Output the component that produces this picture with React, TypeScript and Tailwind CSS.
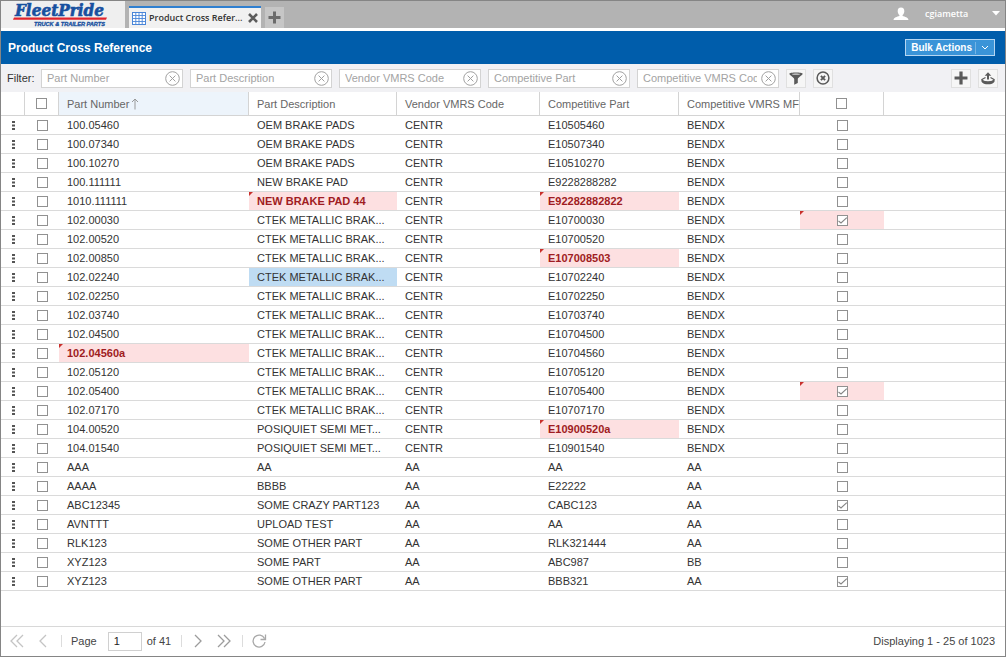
import { useState } from "react";
import type { ReactNode } from "react";

type ColumnKey = "part" | "desc" | "vendor" | "comp" | "mfr";
type Mark = ColumnKey | "flag";

interface Row {
  part: string;
  desc: string;
  vendor: string;
  comp: string;
  mfr: string;
  flag?: boolean;
  changed?: Mark[];
}

const CTEK = "CTEK METALLIC BRAK...";
const POSIQUIET = "POSIQUIET SEMI MET...";

const row = (
  part: string,
  desc: string,
  vendor: string,
  comp: string,
  mfr: string,
  flag = false,
  changed: Mark[] = [],
): Row => ({ part, desc, vendor, comp, mfr, flag, changed });

const ROWS: Row[] = [
  row("100.05460", "OEM BRAKE PADS", "CENTR", "E10505460", "BENDX"),
  row("100.07340", "OEM BRAKE PADS", "CENTR", "E10507340", "BENDX"),
  row("100.10270", "OEM BRAKE PADS", "CENTR", "E10510270", "BENDX"),
  row("100.111111", "NEW BRAKE PAD", "CENTR", "E9228288282", "BENDX"),
  row("1010.111111", "NEW BRAKE PAD 44", "CENTR", "E92282882822", "BENDX", false, ["desc", "comp"]),
  row("102.00030", CTEK, "CENTR", "E10700030", "BENDX", true, ["flag"]),
  row("102.00520", CTEK, "CENTR", "E10700520", "BENDX"),
  row("102.00850", CTEK, "CENTR", "E107008503", "BENDX", false, ["comp"]),
  row("102.02240", CTEK, "CENTR", "E10702240", "BENDX"),
  row("102.02250", CTEK, "CENTR", "E10702250", "BENDX"),
  row("102.03740", CTEK, "CENTR", "E10703740", "BENDX"),
  row("102.04500", CTEK, "CENTR", "E10704500", "BENDX"),
  row("102.04560a", CTEK, "CENTR", "E10704560", "BENDX", false, ["part"]),
  row("102.05120", CTEK, "CENTR", "E10705120", "BENDX"),
  row("102.05400", CTEK, "CENTR", "E10705400", "BENDX", true, ["flag"]),
  row("102.07170", CTEK, "CENTR", "E10707170", "BENDX"),
  row("104.00520", POSIQUIET, "CENTR", "E10900520a", "BENDX", false, ["comp"]),
  row("104.01540", POSIQUIET, "CENTR", "E10901540", "BENDX"),
  row("AAA", "AA", "AA", "AA", "AA"),
  row("AAAA", "BBBB", "AA", "E22222", "AA"),
  row("ABC12345", "SOME CRAZY PART123", "AA", "CABC123", "AA", true),
  row("AVNTTT", "UPLOAD TEST", "AA", "AA", "AA"),
  row("RLK123", "SOME OTHER PART", "AA", "RLK321444", "AA"),
  row("XYZ123", "SOME PART", "AA", "ABC987", "BB"),
  row("XYZ123", "SOME OTHER PART", "AA", "BBB321", "AA", true),
];

const COLUMNS: ColumnKey[] = ["part", "desc", "vendor", "comp", "mfr"];

const FILTERS = [
  "Part Number",
  "Part Description",
  "Vendor VMRS Code",
  "Competitive Part",
  "Competitive VMRS Code",
];

function Logo() {
  return (
    <svg viewBox="0 0 110 27" className="h-[27px] w-[110px]" role="img" aria-label="FleetPride Truck & Trailer Parts">
      <text x="3" y="15" fontFamily="DejaVu Serif Condensed, DejaVu Serif, serif" fontSize="17" fontWeight="700" fontStyle="italic" fill="#17509f" stroke="#17509f" strokeWidth="0.6">
        FleetPride
      </text>
      <path d="M2 16.6H95L94 18.8H1Z" fill="#e0242c" />
      <text x="22" y="24.5" fontFamily="Liberation Sans, sans-serif" fontSize="5.6" fontWeight="700" fontStyle="italic" fill="#17509f" stroke="#17509f" strokeWidth="0.3">
        TRUCK &amp; TRAILER PARTS
      </text>
    </svg>
  );
}

function GridIcon() {
  return (
    <svg viewBox="0 0 14 13" className="h-[13px] w-3.5 shrink-0" aria-hidden="true">
      <rect x="0.5" y="0.5" width="13" height="12" fill="#fff" stroke="#4a86d8" />
      <path d="M0.5 3.5H13.5M0.5 6.5H13.5M0.5 9.5H13.5M3.8 0.5V12.5M7 0.5V12.5M10.2 0.5V12.5" stroke="#4a86d8" strokeWidth="0.9" />
    </svg>
  );
}

function PlusIcon({ className }: { className: string }) {
  return (
    <svg viewBox="0 0 13 13" className={className} aria-hidden="true">
      <path d="M5 0.5H8V5H12.5V8H8V12.5H5V8H0.5V5H5Z" fill="currentColor" />
    </svg>
  );
}

function ToolButton({ label, children }: { label: string; children: ReactNode }) {
  return (
    <button type="button" aria-label={label} className="flex h-[19px] w-5 shrink-0 items-center justify-center border border-[#e0e0e0] bg-[#f6f6f6] text-[#5a5a5a]">
      {children}
    </button>
  );
}

function Tick({ label, initial = false }: { label: string; initial?: boolean }) {
  const [on, setOn] = useState(initial);
  return (
    <span className="relative mx-auto block size-[11px]">
      <input
        type="checkbox"
        aria-label={label}
        checked={on}
        onChange={() => setOn(!on)}
        className="block size-[11px] appearance-none border border-[#919191] bg-white"
      />
      {on && (
        <svg viewBox="0 0 11 11" className="pointer-events-none absolute inset-0 size-[11px]" aria-hidden="true">
          <path d="M1.5 6L4 8L9.8 2.6" fill="none" stroke="#858585" strokeWidth="1.1" />
        </svg>
      )}
    </span>
  );
}

function ChangedCorner() {
  return (
    <svg viewBox="0 0 4 4" className="absolute top-0 left-0 size-1" aria-hidden="true">
      <path d="M0 0H4L0 4Z" fill="#c9302c" />
    </svg>
  );
}

function PagerButton({ label, path, tone }: { label: string; path: string; tone: string }) {
  return (
    <button type="button" aria-label={label} className={tone}>
      <svg viewBox="0 0 16 16" className="size-4" fill="none" stroke="currentColor" strokeWidth="1.3" aria-hidden="true">
        <path d={path} />
      </svg>
    </button>
  );
}

function TopBar() {
  return (
    <header className="flex h-[27px] items-end bg-[#b3b3b3]">
      <div className="flex h-full w-[124px] items-start bg-[#efefef] pl-[11px]">
        <Logo />
      </div>
      <div className="ml-1 flex h-[22px] w-[132px] items-center border-t-2 border-[#2f7fd0] bg-[#f1f1f1] pl-[3px] pr-0.5">
        <GridIcon />
        <span className="ml-[3px] flex-1 whitespace-nowrap font-['Open_Sans',sans-serif] text-[9px] font-semibold text-[#333]">
          Product Cross Refer...
        </span>
        <button type="button" aria-label="Close tab" className="text-[#5c5c5c]">
          <svg viewBox="0 0 12 12" className="size-3" aria-hidden="true">
            <path d="M2 2L10 10M10 2L2 10" stroke="currentColor" strokeWidth="2.6" />
          </svg>
        </button>
      </div>
      <button type="button" aria-label="New tab" className="ml-1 flex h-[21px] w-[19px] items-center justify-center bg-[#c6c6c6] text-[#6b6b6b]">
        <PlusIcon className="size-[13px]" />
      </button>
      <button type="button" className="ml-auto flex h-full items-center pr-[5px] pb-0.5 text-white">
        <svg viewBox="0 0 16 14" className="h-3.5 w-4" aria-hidden="true">
          <path d="M8 0.5C10.3 0.5 11.5 2.2 11.3 4.4C11.2 6 10.5 7.2 9.6 7.9V9C12 9.8 15 10.3 15.5 13H0.5C1 10.3 4 9.8 6.4 9V7.9C5.5 7.2 4.8 6 4.7 4.4C4.5 2.2 5.7 0.5 8 0.5Z" fill="currentColor" />
        </svg>
        <span className="ml-4 w-[67px] text-left font-['Open_Sans',sans-serif] text-[9px] font-semibold">cgiametta</span>
        <svg viewBox="0 0 8 5" className="h-[5px] w-2" aria-hidden="true">
          <path d="M0 0H8L4 4.5Z" fill="currentColor" />
        </svg>
      </button>
    </header>
  );
}

function FilterBar() {
  return (
    <form className="flex h-7 items-center bg-[#f1f1f4] pl-1.5 pr-[7px]" onSubmit={(e) => e.preventDefault()}>
      <span className="w-[34px] shrink-0 text-[#333]">Filter:</span>
      <div className="flex items-center gap-[7px]">
        {FILTERS.map((name) => (
          <div key={name} className="flex h-[19px] w-[142px] items-center border border-[#d3d3d3] bg-white pr-0.5 pl-[5px]">
            <input
              type="text"
              aria-label={name}
              placeholder={name}
              className="w-0 min-w-0 flex-1 bg-transparent text-[#333] outline-none placeholder:text-[#a3a3a3]"
            />
            <button type="button" aria-label={`Clear ${name}`} className="ml-1 text-[#a0a0a0]">
              <svg viewBox="0 0 15 15" className="block size-[15px]" fill="none" stroke="currentColor" aria-hidden="true">
                <circle cx="7.5" cy="7.5" r="6.8" />
                <path d="M4.6 4.6L10.4 10.4M10.4 4.6L4.6 10.4" />
              </svg>
            </button>
          </div>
        ))}
        <ToolButton label="Apply filter">
          <svg viewBox="0 0 14 13" className="h-[13px] w-3.5" aria-hidden="true">
            <path d="M0.3 1.8C0.3 0.2 13.7 0.2 13.7 1.8C13.7 3.2 9 5.5 8.8 7V11L5.2 12.8V7C5 5.5 0.3 3.2 0.3 1.8Z" fill="currentColor" />
            <path d="M2.8 2.2C4.5 1.4 9.5 1.4 11.2 2.2C9.5 3 4.5 3 2.8 2.2Z" fill="#d8d8d8" />
          </svg>
        </ToolButton>
        <ToolButton label="Clear filters">
          <svg viewBox="0 0 14 14" className="size-3.5" fill="none" stroke="currentColor" aria-hidden="true">
            <circle cx="7" cy="7" r="5.9" strokeWidth="1.5" />
            <path d="M4.9 4.9L9.1 9.1M9.1 4.9L4.9 9.1" strokeWidth="1.9" />
          </svg>
        </ToolButton>
      </div>
      <div className="ml-auto flex gap-[7px]">
        <ToolButton label="Add">
          <PlusIcon className="size-3.5" />
        </ToolButton>
        <ToolButton label="Export">
          <svg viewBox="0 0 14 13" className="h-[13px] w-3.5" aria-hidden="true">
            <path d="M7 0.3L10.3 3.8H8V7.6H6V3.8H3.7Z" fill="currentColor" />
            <path d="M4.5 5.6L0.9 7.6C1.4 9.2 3.8 10 7 10S12.6 9.2 13.1 7.6L9.5 5.6" fill="none" stroke="currentColor" strokeWidth="1.2" />
            <path d="M0.5 7.6C2.5 10 11.5 10 13.5 7.6V9.8C12 13.2 2 13.2 0.5 9.8Z" fill="currentColor" />
          </svg>
        </ToolButton>
      </div>
    </form>
  );
}

function Grid() {
  const head = "border-r border-b border-[#d4d4d4] p-0 pl-2 text-left font-normal whitespace-nowrap overflow-hidden";
  return (
    <table className="w-full table-fixed border-separate border-spacing-0">
      <colgroup>
        <col className="w-6" />
        <col className="w-[34px]" />
        <col className="w-[190px]" />
        <col className="w-[148px]" />
        <col className="w-[143px]" />
        <col className="w-[139px]" />
        <col className="w-[121px]" />
        <col className="w-[84px]" />
        <col />
      </colgroup>
      <thead>
        <tr className="h-6 text-[#666]">
          <td className="border-r border-b border-[#d4d4d4] p-0" />
          <th className="border-r border-b border-[#d4d4d4] p-0">
            <Tick label="Select all rows" />
          </th>
          <th className={`${head} bg-[#edf4fb]`} aria-sort="ascending">
            <span className="flex items-center">
              Part Number
              <svg viewBox="0 0 8 12" className="ml-0.5 h-3 w-2" fill="none" stroke="#999" aria-hidden="true">
                <path d="M4 1V11.5M1 4L4 1L7 4" />
              </svg>
            </span>
          </th>
          <th className={head}>Part Description</th>
          <th className={head}>Vendor VMRS Code</th>
          <th className={head}>Competitive Part</th>
          <th className={head}>Competitive VMRS MFR</th>
          <th className="border-r border-b border-[#d4d4d4] p-0">
            <Tick label="Flag all rows" />
          </th>
          <td className="border-b border-[#d4d4d4] p-0" />
        </tr>
      </thead>
      <tbody>
        {ROWS.map((r, i) => (
          <tr key={i} className="h-[19px] text-[#333]">
            <td className="border-b border-[#dadada] p-0">
              <button type="button" aria-label={`Row ${i + 1} menu`} className="mx-auto block text-[#555]">
                <svg viewBox="0 0 3 9" className="block h-[9px] w-[3px]" aria-hidden="true">
                  <path d="M0 0H3V2H0ZM0 3.5H3V5.5H0ZM0 7H3V9H0Z" fill="currentColor" />
                </svg>
              </button>
            </td>
            <td className="border-b border-[#dadada] p-0">
              <Tick label={`Select row ${i + 1}`} />
            </td>
            {COLUMNS.map((c) => {
              const changed = r.changed?.includes(c);
              const tone = changed
                ? "bg-[#fde0e1] font-bold text-[#a01c22]"
                : i === 8 && c === "desc"
                  ? "bg-[#bfdcf3]"
                  : "";
              return (
                <td key={c} className={`relative truncate border-b border-[#dadada] py-0 pr-2 pl-2 leading-[18px] ${tone}`}>
                  {changed && <ChangedCorner />}
                  {r[c]}
                </td>
              );
            })}
            <td className={`relative border-b border-[#dadada] p-0 ${r.changed?.includes("flag") ? "bg-[#fde0e1]" : ""}`}>
              {r.changed?.includes("flag") && <ChangedCorner />}
              <Tick label={`Flag row ${i + 1}`} initial={r.flag} />
            </td>
            <td className="border-b border-[#dadada] p-0" />
          </tr>
        ))}
      </tbody>
    </table>
  );
}

function Pager() {
  const bar = <span className="h-3 w-px bg-[#dcdcdc]" />;
  return (
    <footer className="mt-auto flex h-[30px] items-center border-t border-[#d8d8d8] pr-2.5 pb-px pl-2 text-[#444]">
      <PagerButton label="First page" tone="text-[#c4c4c4]" path="M8 2L2 8L8 14M14 2L8 8L14 14" />
      <span className="w-2.5" />
      <PagerButton label="Previous page" tone="text-[#c4c4c4]" path="M11 2L5 8L11 14" />
      <span className="w-2.5" />
      {bar}
      <label htmlFor="page" className="ml-[9px]">Page</label>
      <input id="page" type="text" defaultValue="1" className="ml-[11px] h-[19px] w-[34px] border border-[#d0d0d0] bg-white pl-[5px] text-[#222] outline-none" />
      <span className="mr-2.5 ml-[5px]">of 41</span>
      {bar}
      <span className="w-2" />
      <PagerButton label="Next page" tone="text-[#9c9c9c]" path="M5 2L11 8L5 14" />
      <span className="w-2.5" />
      <PagerButton label="Last page" tone="text-[#9c9c9c]" path="M2 2L8 8L2 14M8 2L14 8L8 14" />
      <span className="w-2.5" />
      {bar}
      <span className="w-2" />
      <PagerButton label="Refresh" tone="text-[#a8a8a8]" path="M13.5 5.5A6 6 0 1 0 14 9M14.5 1.5V6.5H9.5" />
      <span className="ml-auto">Displaying 1 - 25 of 1023</span>
    </footer>
  );
}

export default function App() {
  return (
    <div className="flex min-h-screen flex-col border border-[#858585] bg-white font-['Liberation_Sans',Arial,sans-serif] text-[11px] leading-4">
      <TopBar />
      <div className="mt-[3px] flex h-[33px] items-center justify-between bg-[#005dab] pr-2.5 pl-[7px] text-white">
        <h1 className="text-[12px] font-bold">Product Cross Reference</h1>
        <button type="button" className="flex h-[17px] items-center border border-[#b5d6f2] bg-[#3a94d8] pl-[5px] text-[10px] font-bold">
          Bulk Actions
          <span className="ml-[3px] h-3 w-px bg-[#74b4e4]" />
          <svg viewBox="0 0 8 5" className="mx-[5px] h-[5px] w-2" fill="none" stroke="#fff" aria-hidden="true">
            <path d="M1 1L4 4L7 1" />
          </svg>
        </button>
      </div>
      <FilterBar />
      <Grid />
      <Pager />
    </div>
  );
}
